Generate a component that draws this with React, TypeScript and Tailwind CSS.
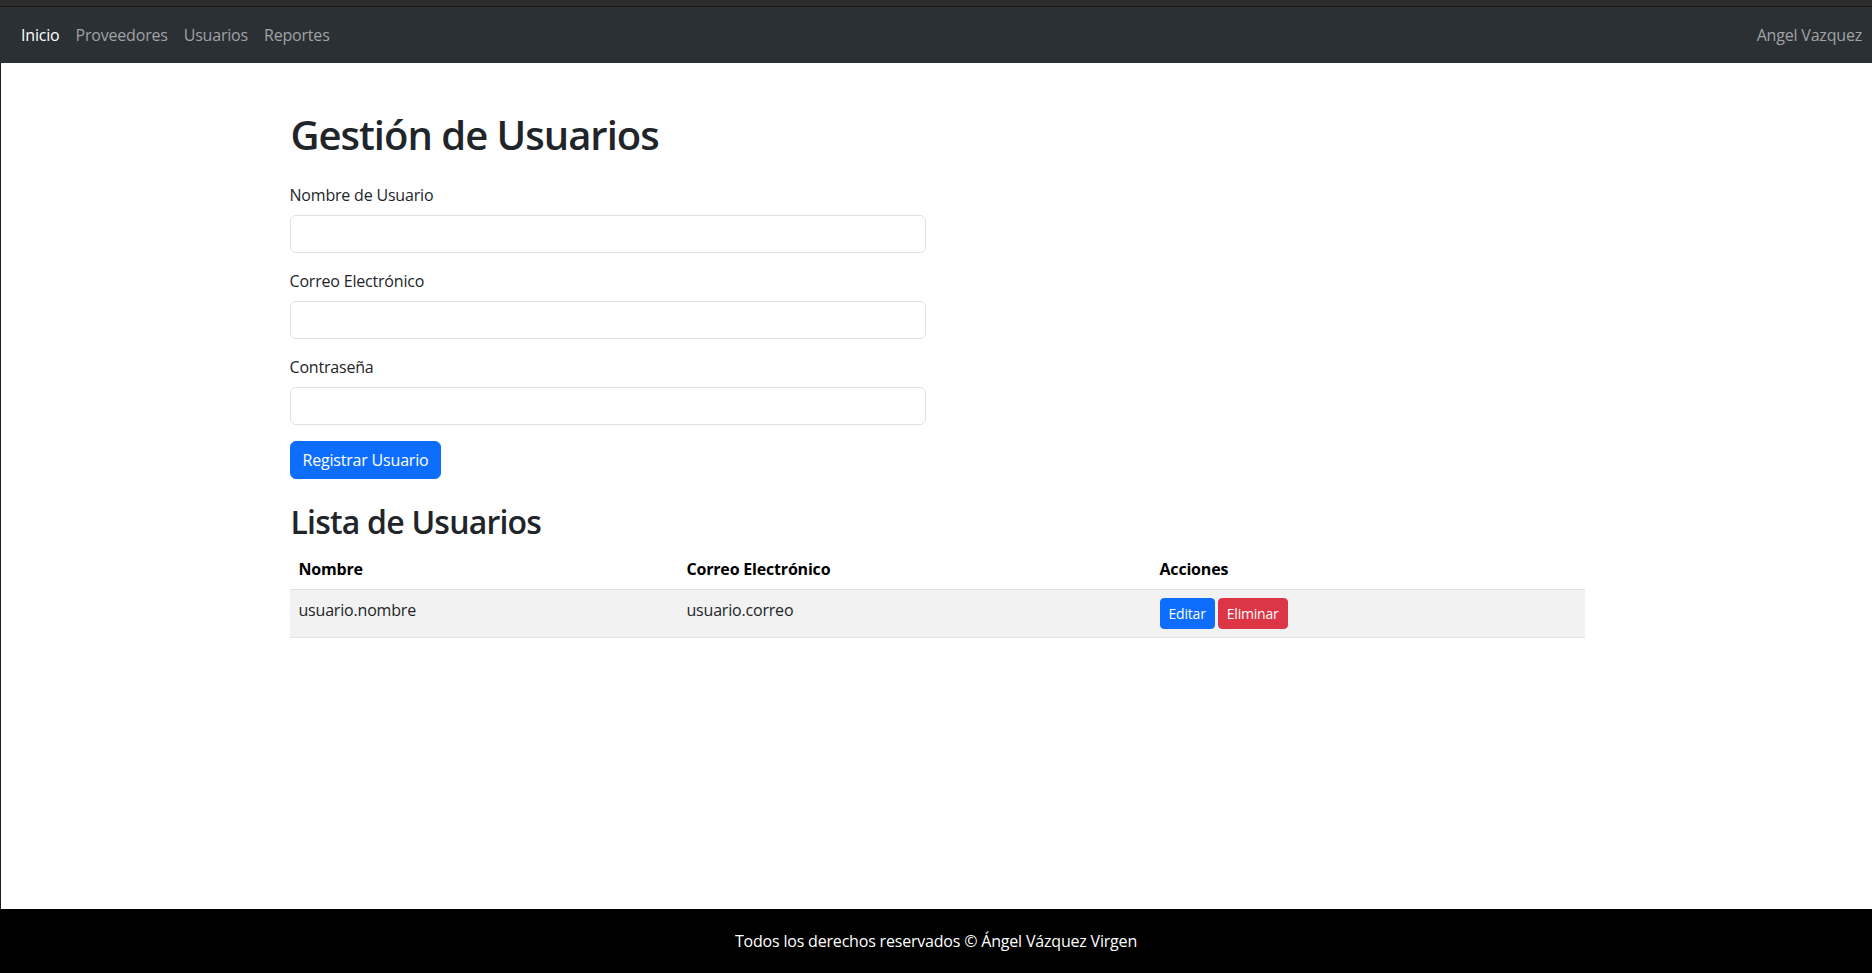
const links = [
  { label: "Inicio", active: true },
  { label: "Proveedores", active: false },
  { label: "Usuarios", active: false },
  { label: "Reportes", active: false },
];

const usuarios = [{ nombre: "usuario.nombre", correo: "usuario.correo" }];

function Campo({ label, type }: { label: string; type: string }) {
  return (
    <div className="mb-4">
      <label className="mb-2 block leading-6">{label}</label>
      <input
        type={type}
        className="block h-[38px] w-full rounded-md border border-[#dee2e6] bg-white px-3 outline-none"
      />
    </div>
  );
}

export default function App() {
  return (
    <div className="flex min-h-screen flex-col bg-white font-['Open_Sans',sans-serif] text-base tracking-[-0.012em] text-[#212529]">
      <div className="h-[7px] border-b border-[#1a1a1a] bg-[#2d2d2d]" />
      <nav className="flex h-14 items-center justify-between bg-[#2b3035] pl-[13px] pr-[10px]">
        <ul className="flex">
          {links.map((l) => (
            <li key={l.label}>
              <a
                href="#"
                className={
                  l.active
                    ? "block px-2 py-2 leading-6 text-white"
                    : "block px-2 py-2 leading-6 text-[#a0a2a4]"
                }
              >
                {l.label}
              </a>
            </li>
          ))}
        </ul>
        <span className="leading-6 text-[#a0a2a4]">Angel Vazquez</span>
      </nav>

      <main className="flex-1 border-l border-[#1f1f1f]">
        <div className="mx-auto w-[1320px] pl-[13px] pr-3 pt-12">
          <h1 className="mb-6 pl-px text-[40px] font-semibold leading-[1.2] tracking-[-0.025em]">
            Gestión de Usuarios
          </h1>
          <form className="w-[636px]">
            <Campo label="Nombre de Usuario" type="text" />
            <Campo label="Correo Electrónico" type="email" />
            <Campo label="Contraseña" type="password" />
            <button
              type="button"
              className="h-[38px] rounded-md border border-[#0d6efd] bg-[#0d6efd] px-3 leading-6 text-white"
            >
              Registrar Usuario
            </button>
          </form>

          <h2 className="mb-2 mt-6 pl-px text-[32px] font-semibold leading-[1.2] tracking-[-0.025em]">
            Lista de Usuarios
          </h2>
          <table className="w-full border-collapse text-left">
            <thead>
              <tr className="border-b border-[#dee2e6]">
                <th className="w-[389px] p-2 pl-[9px] font-bold leading-6 text-black">Nombre</th>
                <th className="w-[473px] p-2 font-bold leading-6 text-black">Correo Electrónico</th>
                <th className="p-2 font-bold leading-6 text-black">Acciones</th>
              </tr>
            </thead>
            <tbody>
              {usuarios.map((u) => (
                <tr key={u.nombre} className="border-b border-[#dee2e6] bg-[#f2f2f2]">
                  <td className="p-2 pl-[9px] align-top leading-6">{u.nombre}</td>
                  <td className="p-2 align-top leading-6">{u.correo}</td>
                  <td className="p-2 align-top">
                    <div className="flex gap-[3px]">
                      <button className="h-[31px] rounded border border-[#0d6efd] bg-[#0d6efd] px-2 text-sm text-white">
                        Editar
                      </button>
                      <button className="h-[31px] rounded border border-[#dc3545] bg-[#dc3545] px-2 text-sm text-white">
                        Eliminar
                      </button>
                    </div>
                  </td>
                </tr>
              ))}
            </tbody>
          </table>
        </div>
      </main>

      <footer className="bg-black py-5 text-center leading-6 text-white">
        Todos los derechos reservados © Ángel Vázquez Virgen
      </footer>
    </div>
  );
}
